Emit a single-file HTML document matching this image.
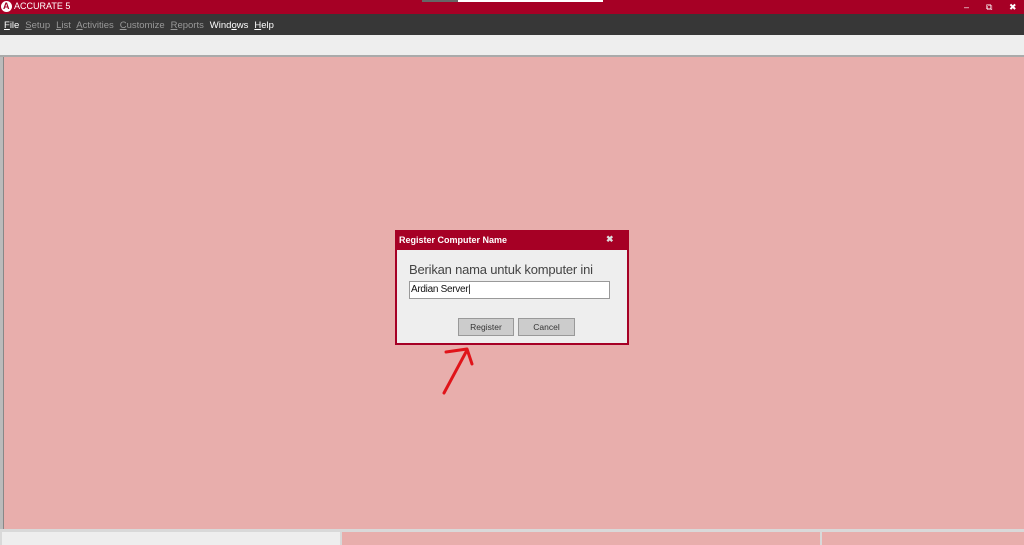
<!DOCTYPE html>
<html><head><style>
body{margin:0;width:1024px;height:545px;overflow:hidden;font-family:"Liberation Sans",sans-serif;background:#e8aeac;position:relative}
div{position:absolute;box-sizing:border-box}
</style></head><body>
<div style="left:0;top:0;width:1024px;height:14px;background:#a60025"></div>
<div style="left:422px;top:0;width:181px;height:2px;background:#fff"></div>
<div style="left:422px;top:0;width:36px;height:2px;background:#666"></div>
<div style="left:1px;top:1px;width:11px;height:11px;border-radius:50%;background:#fff"></div>
<div style="left:3px;top:2px;width:7px;height:9px;color:#a60025;font-size:9px;font-weight:bold;line-height:9px">A</div>
<div style="left:14px;top:0;color:#fff;font-size:9px;line-height:12px">ACCURATE 5</div>
<div style="left:964px;top:1px;color:#fff;font-size:9px;line-height:12px">–</div>
<div style="left:986px;top:1px;color:#fff;font-size:9px;line-height:12px">⧉</div>
<div style="left:1009px;top:1px;color:#fff;font-size:9px;line-height:12px">✖</div>
<div style="left:0;top:14px;width:1024px;height:21px;background:#373737"></div>
<div style="left:4px;top:14px;height:21px;line-height:24px;font-size:9.5px;color:#999;word-spacing:3.3px;white-space:nowrap"><span style="color:#fff"><u>F</u>ile</span> <u>S</u>etup <u>L</u>ist <u>A</u>ctivities <u>C</u>ustomize <u>R</u>eports <span style="color:#fff">Wind<u>o</u>ws</span> <span style="color:#fff"><u>H</u>elp</span></div>
<div style="left:0;top:35px;width:1024px;height:22px;background:#eeeeee;border-bottom:2px solid #aaa"></div>
<div style="left:0;top:57px;width:4px;height:474px;background:#bbb;border-right:1px solid #888"></div>
<div style="left:0;top:529px;width:1024px;height:16px;background:#d9d9d9"></div>
<div style="left:2px;top:532px;width:338px;height:13px;background:#eeeeee"></div>
<div style="left:342px;top:532px;width:478px;height:13px;background:#e8aeac"></div>
<div style="left:822px;top:532px;width:202px;height:13px;background:#e8aeac"></div>
<div style="left:395px;top:230px;width:234px;height:115px;background:#a60025"></div>
<div style="left:397px;top:250px;width:230px;height:93px;background:#eeeeee"></div>
<div style="left:399px;top:235px;color:#fff;font-size:9px;font-weight:bold">Register Computer Name</div>
<div style="left:606px;top:234px;color:#ddd;font-size:9px;font-weight:bold">✖</div>
<div style="left:409px;top:262px;font-size:13px;color:#444;letter-spacing:-0.2px">Berikan nama untuk komputer ini</div>
<div style="left:409px;top:281px;width:201px;height:18px;background:#fff;border:1px solid #999;font-size:10px;line-height:16px;padding-left:1px;color:#111;letter-spacing:-0.3px">Ardian Server|</div>
<div style="left:458px;top:318px;width:56px;height:18px;background:#ccc;border:1px solid #999;font-size:8.5px;line-height:16px;text-align:center;color:#333">Register</div>
<div style="left:518px;top:318px;width:57px;height:18px;background:#ccc;border:1px solid #999;font-size:8.5px;line-height:16px;text-align:center;color:#333">Cancel</div>
<svg style="position:absolute;left:0;top:0" width="1024" height="545"><path d="M444 393 L466 352 M446 352 L467 349 L472 364" stroke="#e0141a" stroke-width="3" fill="none" stroke-linecap="round" stroke-linejoin="round"/></svg>
</body></html>
